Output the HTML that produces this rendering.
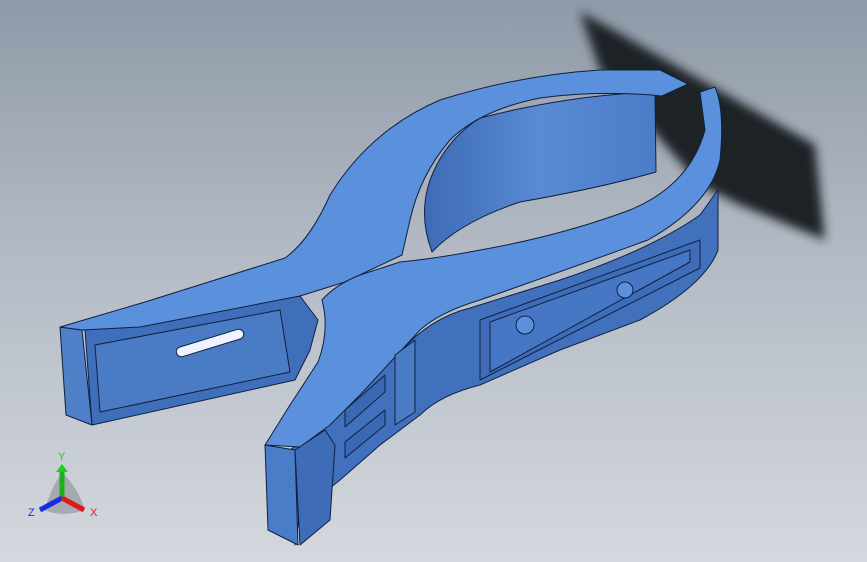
<!DOCTYPE html>
<html><head><style>
html,body{margin:0;padding:0;width:867px;height:562px;overflow:hidden}
body{background:linear-gradient(180deg,#8f9aa8 0%,#b3bac4 45%,#d4d8de 100%)}
svg{position:absolute;left:0;top:0}
</style></head><body>
<svg width="867" height="562" viewBox="0 0 867 562">
<defs>
<filter id="bl"><feGaussianBlur stdDeviation="5"/></filter>
<linearGradient id="wall" x1="0" x2="1"><stop offset="0" stop-color="#3d6bb5"/><stop offset="0.5" stop-color="#5a8ad4"/><stop offset="1" stop-color="#4a7cc8"/></linearGradient>
</defs>
<polygon points="580,12 610,28 815,145 825,240 740,205 700,185 600,70" fill="#1e2228" filter="url(#bl)"/>
<g stroke="#102040" stroke-width="1" stroke-linejoin="round">
<!-- lower arm outer side / ring outer wall -->
<path d="M290,450 L330,420 L400,352 Q430,318 470,308 L560,280 Q650,250 700,215 L718,190 L718,250 Q705,285 640,320 L560,350 L480,385 Q440,395 420,415 L380,445 L340,480 L300,512 L295,545Z" fill="#4170bc"/>
<!-- ring inner wall -->
<path d="M480,118 Q570,95 655,92 L656,172 Q600,188 520,202 Q460,222 432,252 Q418,215 430,180 Q445,140 480,118Z" fill="url(#wall)"/>
<!-- upper handle inner side -->
<polygon points="85,330 300,296 318,320 310,350 295,380 92,425" fill="#3f6fba"/>
<polygon points="95,345 280,310 290,372 100,412" fill="#4a7cc6"/>
<polygon points="60,327 82,330 92,425 66,415" fill="#4f80c8"/>
<!-- upper arm top face -->
<path d="M60,327 L145,302 L285,258 Q310,240 330,195 Q370,130 440,100 Q520,75 600,70 L660,70 L688,84 L662,96 Q600,90 540,98 Q480,110 450,140 Q420,175 410,220 L402,255 L345,282 L300,296 L140,327 L82,330Z" fill="#5a90dc"/>
<!-- lower arm top face -->
<path d="M265,445 L290,405 L318,362 Q330,330 322,300 Q335,285 360,275 L400,262 Q440,258 480,250 Q560,236 630,210 Q690,185 705,130 L700,92 L715,87 Q725,110 720,160 Q710,205 648,240 Q560,272 480,300 Q440,312 420,330 L360,395 L330,425 L300,447Z" fill="#5a90dc"/>
<polygon points="265,445 295,450 298,545 268,530" fill="#4a7cc8"/>
<polygon points="295,450 325,430 335,445 330,520 300,545" fill="#3f6cb8"/>
<rect x="175" y="338" width="70" height="10" rx="5" transform="rotate(-17 210 343)" fill="#eef3ff"/>
<polygon points="345,410 385,375 385,392 345,427" fill="#3a68b5"/>
<polygon points="345,442 385,410 385,425 345,458" fill="#3a68b5"/>
<polygon points="395,355 415,340 415,412 395,425" fill="#4a7cc6"/>
<polygon points="480,320 700,240 700,268 480,380" fill="#3f6cb8"/>
<polygon points="490,322 690,250 690,262 490,372" fill="#4677c4"/>
<circle cx="525" cy="325" r="9" fill="#5a90dc"/>
<circle cx="625" cy="290" r="8" fill="#5a90dc"/>
</g>
<path d="M62 472 Q50 490 45 510 Q62 518 85 510 Q78 488 62 472Z" fill="#8a8f96" opacity="0.6"/>
<line x1="62" y1="498" x2="62" y2="470" stroke="#1bb01b" stroke-width="5"/>
<polygon points="56,472 68,472 62,464" fill="#1bd01b"/>
<line x1="62" y1="498" x2="40" y2="510" stroke="#1a2ae0" stroke-width="5"/>
<line x1="62" y1="498" x2="84" y2="510" stroke="#e01a1a" stroke-width="5"/>
<text x="58" y="460" font-family="Liberation Sans,sans-serif" font-size="11" fill="#1bd01b">Y</text>
<text x="90" y="516" font-family="Liberation Sans,sans-serif" font-size="11" fill="#e01a1a">X</text>
<text x="28" y="516" font-family="Liberation Sans,sans-serif" font-size="11" fill="#1a2ae0">Z</text>
</svg>
</body></html>
